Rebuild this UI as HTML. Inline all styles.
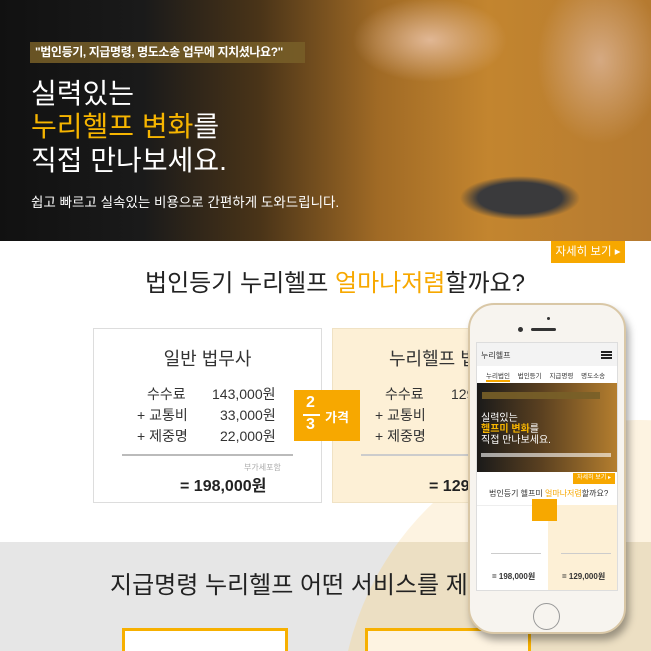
<!DOCTYPE html>
<html><head><meta charset="utf-8"><style>
*{margin:0;padding:0;box-sizing:border-box}
html,body{width:651px;height:651px;overflow:hidden}
body{font-family:"Liberation Sans","Noto Sans CJK KR",sans-serif;background:#fff}
#w{position:relative;width:651px;height:651px;overflow:hidden}
.a{position:absolute}
.hero{left:0;top:0;width:651px;height:241px;background:
radial-gradient(ellipse 60px 22px at 520px 198px,#3a3a3c 0%,#3a3a3c 70%,transparent 100%),
radial-gradient(ellipse 110px 60px at 430px 40px,rgba(230,190,160,.9),transparent 70%),
radial-gradient(ellipse 90px 120px at 600px 60px,rgba(220,180,150,.8),transparent 70%),
linear-gradient(90deg,#111 0%,#1a1a1a 22%,#4a3418 40%,#a06a25 58%,#c3852f 75%,#b57a30 100%);}
.q{left:30px;top:42px;width:275px;height:21px;background:rgba(120,95,40,.85);color:#fff;font-size:12px;line-height:21px;padding-left:5px;font-weight:bold;white-space:nowrap;letter-spacing:-0.4px;overflow:hidden}
.h{left:31px;color:#fff;font-size:28px;line-height:34px;white-space:nowrap}
.y{color:#f7b500}
.btn{left:551px;top:241px;width:74px;height:22px;background:#f7a800;color:#fff;font-size:11.5px;line-height:22px;text-align:center}
.t{font-size:24px;color:#222;white-space:nowrap}
.card{top:328px;height:175px;border:1px solid #ddd}
.row{position:absolute;font-size:14px;color:#333;white-space:nowrap}
.circ{border-radius:50%}
.tot{font-size:16px;font-weight:bold;color:#222;white-space:nowrap}
</style></head><body><div id="w">
<div class="a circ" style="left:340px;top:420px;width:600px;height:600px;background:#fdf3e1"></div>
<div class="a" style="left:0;top:542px;width:651px;height:109px;background:#e6e6e6;overflow:hidden">
 <div class="a circ" style="left:340px;top:-122px;width:600px;height:600px;background:#ecdfc3"></div>
</div>
<div class="a hero"></div>
<div class="a q">"법인등기, 지급명령, 명도소송 업무에 지치셨나요?"</div>
<div class="a h" style="top:77px">실력있는</div>
<div class="a h" style="top:110px"><span class="y">누리헬프 변화</span>를</div>
<div class="a h" style="top:144px">직접 만나보세요.</div>
<div class="a" style="left:31px;top:191px;color:#fff;font-size:13.5px;white-space:nowrap">쉽고 빠르고 실속있는 비용으로 간편하게 도와드립니다.</div>
<div class="a btn">자세히 보기 ▸</div>
<div class="a t" style="left:145px;top:263px">법인등기 누리헬프 <span style="color:#f7a800">얼마나저렴</span>할까요?</div>

<div class="a card" style="left:93px;width:229px;background:#fff">
 <div class="a" style="left:0;width:227px;top:16px;text-align:center;font-size:18px;color:#333">일반 법무사</div>
 <div class="row" style="left:53px;top:55px">수수료</div><div class="row" style="left:118px;top:55px">143,000원</div>
 <div class="row" style="left:43px;top:76px">+ 교통비</div><div class="row" style="left:126px;top:76px">33,000원</div>
 <div class="row" style="left:43px;top:97px">+ 제중명</div><div class="row" style="left:126px;top:97px">22,000원</div>
 <div class="a" style="left:28px;top:125px;width:171px;height:2px;background:#bbb"></div>
 <div class="a" style="left:150px;top:133px;font-size:8px;color:#aaa">부가세포함</div>
 <div class="a tot" style="left:86px;top:143px">= 198,000원</div>
</div>
<div class="a card" style="left:332px;width:180px;background:#fdf0d6;border-color:#f0e2c4">
 <div class="a" style="left:56px;top:16px;font-size:18px;color:#333;white-space:nowrap">누리헬프 법무사</div>
 <div class="row" style="left:52px;top:55px">수수료</div><div class="row" style="left:118px;top:55px">129,000원</div>
 <div class="row" style="left:42px;top:76px">+ 교통비</div>
 <div class="row" style="left:42px;top:97px">+ 제중명</div>
 <div class="a" style="left:28px;top:125px;width:150px;height:2px;background:#ccc"></div>
 <div class="a tot" style="left:96px;top:143px">= 129,000원</div>
</div>
<div class="a" style="left:294px;top:390px;width:66px;height:51px;background:#f7a800;color:#fff">
 <div class="a" style="left:12px;top:4px;font-size:16px;font-weight:bold">2</div>
 <div class="a" style="left:9px;top:24px;width:17px;height:2px;background:#fff"></div>
 <div class="a" style="left:12px;top:26px;font-size:16px;font-weight:bold">3</div>
 <div class="a" style="left:31px;top:17px;font-size:13px;font-weight:bold">가격</div>
</div>

<div class="a t" style="left:110px;top:565px">지급명령 누리헬프 어떤 서비스를 제공할까요?</div>
<div class="a" style="left:122px;top:628px;width:166px;height:23px;border:3px solid #f7b000;border-bottom:0;background:#fff"></div>
<div class="a" style="left:365px;top:628px;width:166px;height:23px;border:3px solid #f7b000;border-bottom:0;background:#fdf3e1"></div>

<div class="a" style="left:468px;top:303px;width:158px;height:331px;border-radius:26px;background:#f7f4ef;border:2px solid #d9c7a6;box-shadow:3px 6px 8px rgba(0,0,0,.35)">
 <div class="a circ" style="left:77px;top:12px;width:3px;height:3px;background:#333"></div>
 <div class="a circ" style="left:48px;top:22px;width:5px;height:5px;background:#333"></div>
 <div class="a" style="left:61px;top:23px;width:25px;height:3px;border-radius:2px;background:#333"></div>
 <div class="a circ" style="left:63px;top:298px;width:27px;height:27px;border:1.5px solid #999"></div>
 <div class="a" style="left:6px;top:37px;width:142px;height:249px;background:#fff;border:1px solid #ddd;overflow:hidden;font-size:7px;color:#333">
  <div class="a" style="left:0;top:0;width:142px;height:23px;background:#f3f3f3"></div>
  <div class="a" style="left:4px;top:7px;font-size:8px">누리헬프</div>
  <div class="a" style="left:124px;top:8px;width:11px;height:2px;background:#222;box-shadow:0 3px #222,0 6px #222"></div>
  <div class="a" style="left:9px;top:27px;white-space:nowrap;font-size:6.5px;word-spacing:6px">누리법인 법인등기 지급명령 명도소송</div>
  <div class="a" style="left:9px;top:37px;width:24px;height:2px;background:#f7a800"></div>
  <div class="a" style="left:0;top:40px;width:142px;height:89px;background:linear-gradient(90deg,#1a1a1a,#5a4020 45%,#b7802f)"></div>
  <div class="a" style="left:5px;top:49px;width:118px;height:7px;background:rgba(120,95,40,.9)"></div>
  <div class="a" style="left:4px;top:70px;color:#fff;font-size:10px;line-height:11px;white-space:nowrap">실력있는<br><span style="color:#f7b500;font-weight:bold">헬프미 변화</span>를<br>직접 만나보세요.</div>
  <div class="a" style="left:4px;top:110px;width:130px;height:4px;background:rgba(255,255,255,.6)"></div>
  <div class="a" style="left:96px;top:130px;width:42px;height:11px;background:#f7a800;color:#fff;font-size:6px;line-height:11px;text-align:center;white-space:nowrap">자세히 보기 ▸</div>
  <div class="a" style="left:12px;top:145px;font-size:8px;white-space:nowrap">법인등기 헬프미 <span style="color:#f7a800">얼마나저렴</span>할까요?</div>
  <div class="a" style="left:0;top:162px;width:142px;height:87px;border-top:1px solid #eee"></div>
  <div class="a" style="left:71px;top:162px;width:71px;height:87px;background:#fdf0d6"></div>
  <div class="a" style="left:55px;top:156px;width:25px;height:22px;background:#f7a800"></div>
  <div class="a" style="left:14px;top:210px;width:50px;height:1px;background:#ccc"></div>
  <div class="a" style="left:84px;top:210px;width:50px;height:1px;background:#ccc"></div>
  <div class="a" style="left:15px;top:228px;font-size:8px;font-weight:bold;white-space:nowrap">= 198,000원</div>
  <div class="a" style="left:85px;top:228px;font-size:8px;font-weight:bold;white-space:nowrap">= 129,000원</div>
 </div>
</div>
</div></body></html>
